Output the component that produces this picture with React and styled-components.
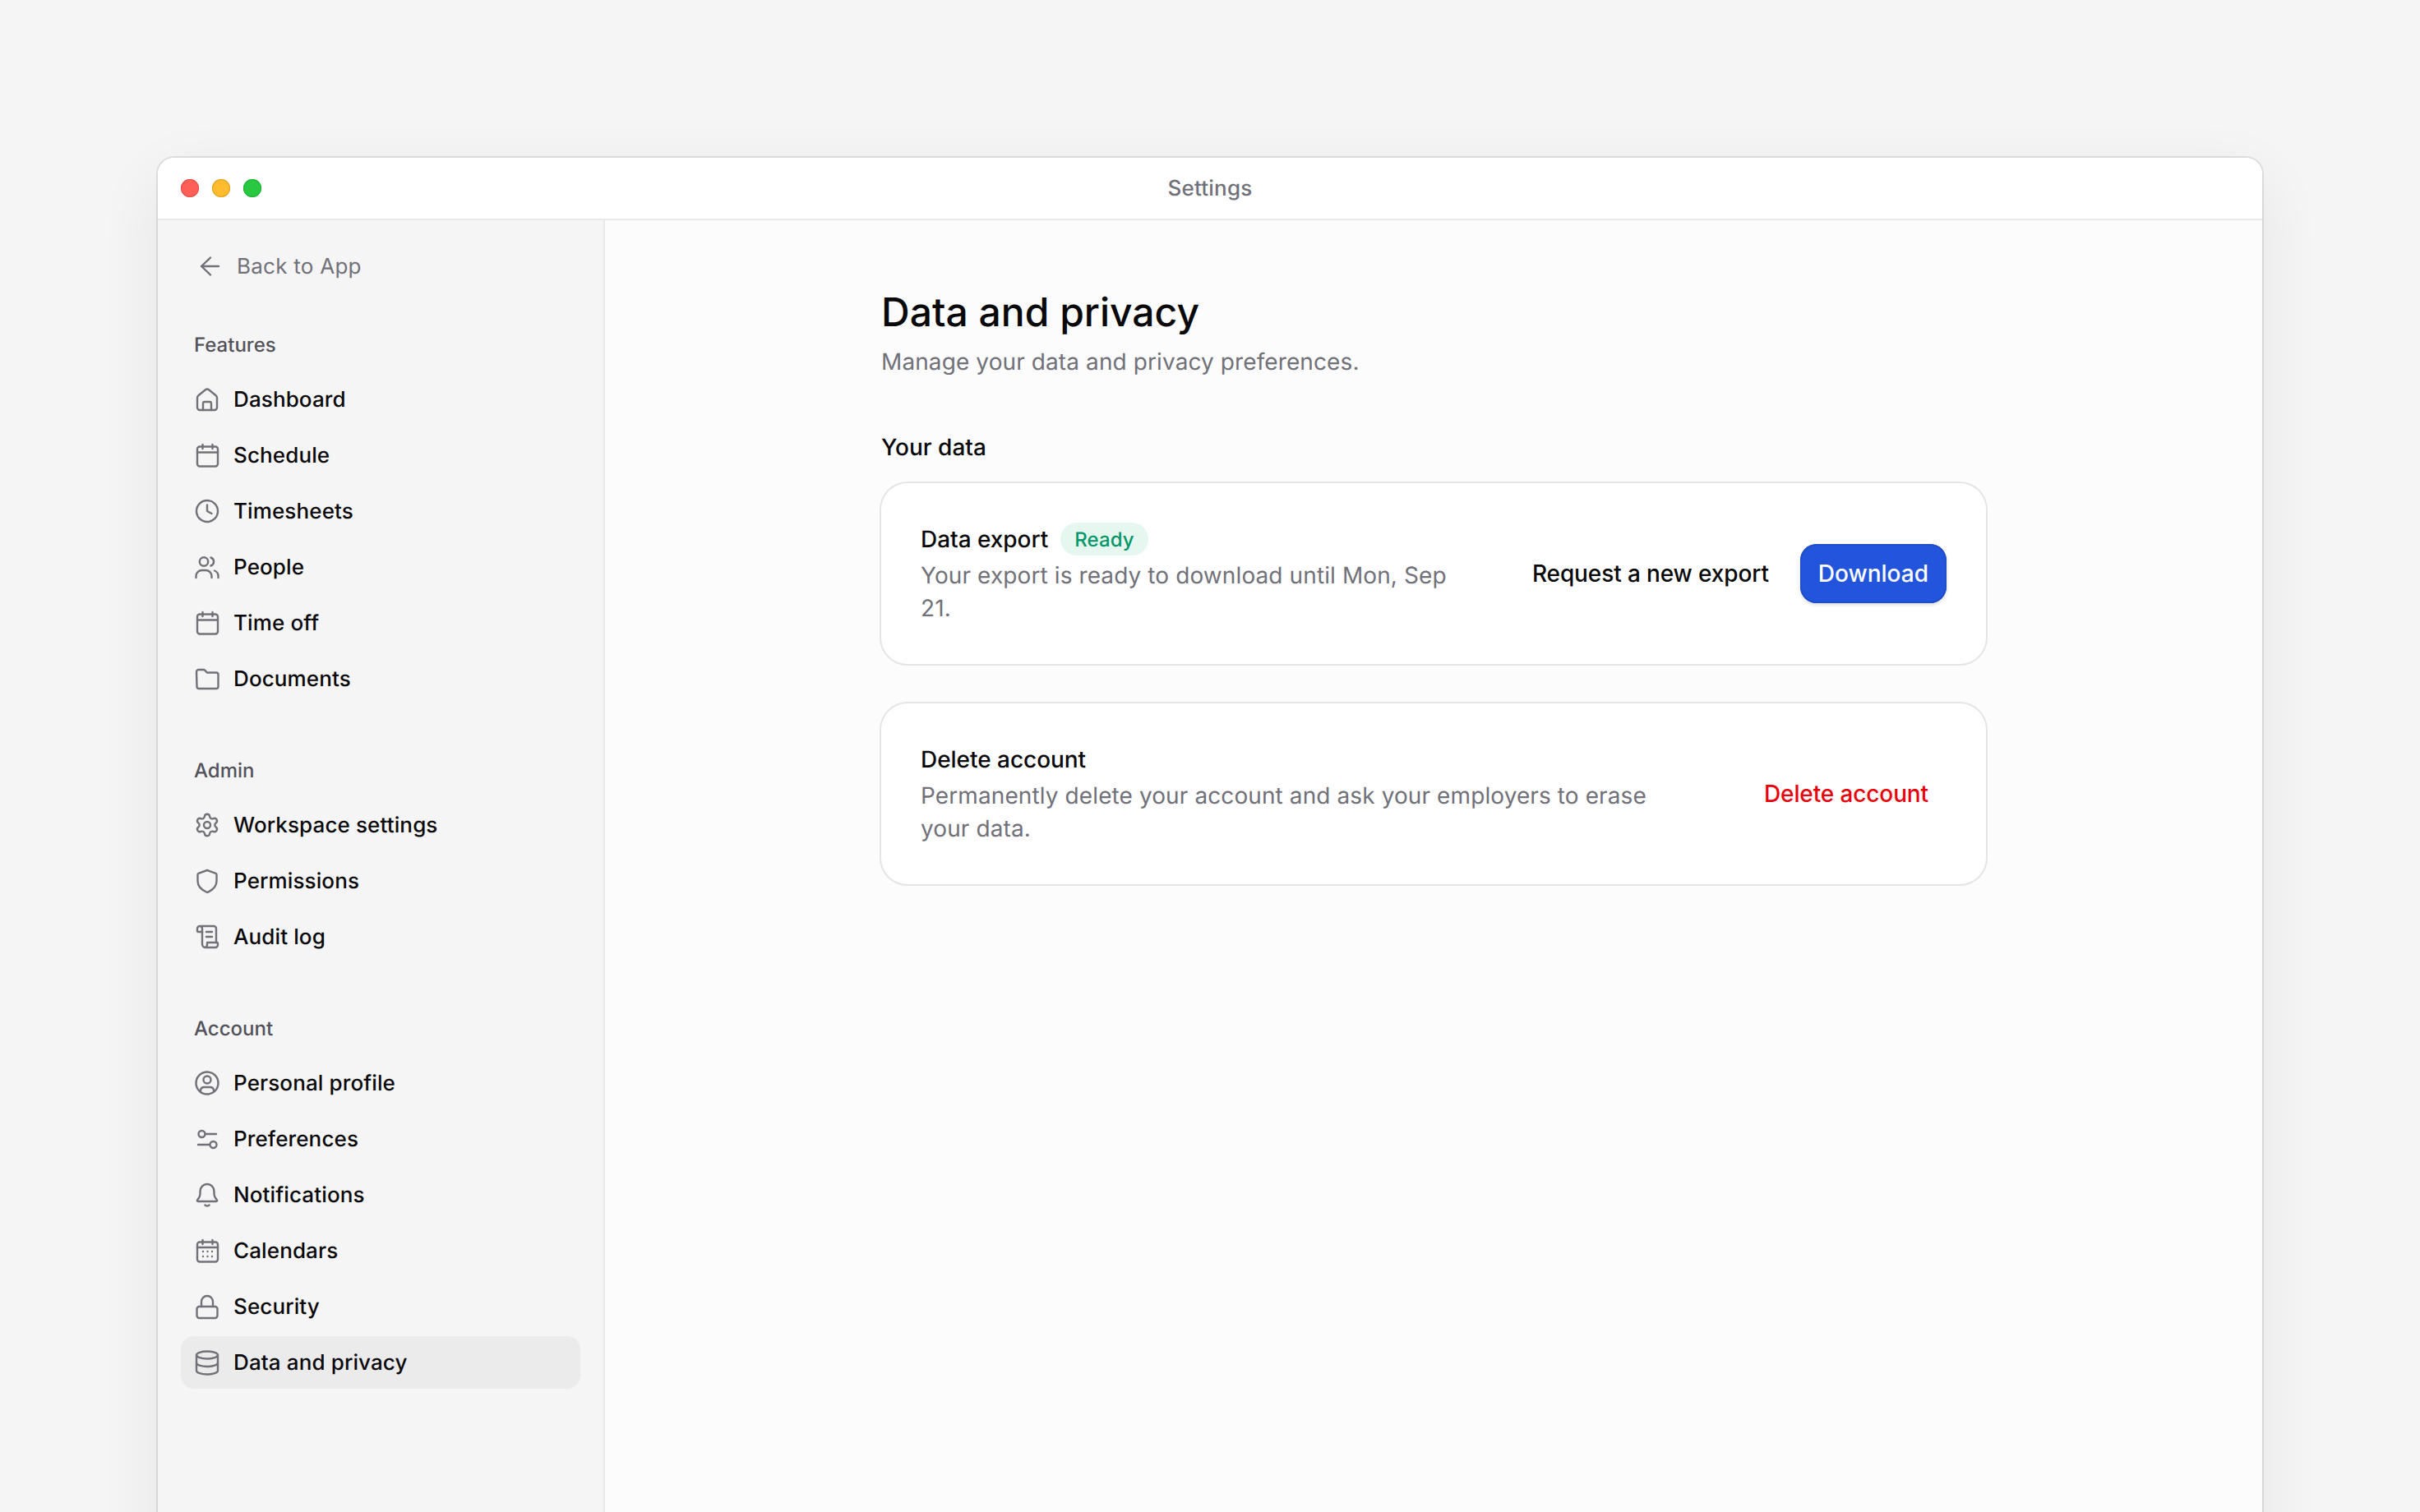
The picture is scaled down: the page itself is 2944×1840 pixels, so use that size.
import React from "react";
import styled, { createGlobalStyle } from "styled-components";
import { Settings as SettingsGear } from "lucide-react";

const Global = createGlobalStyle`
  html, body { margin: 0; padding: 0; background: #f5f5f5; }
  * { box-sizing: border-box; }
  body { font-family: Inter, "Liberation Sans", sans-serif; -webkit-font-smoothing: antialiased; text-rendering: geometricPrecision; }
`;

const Page = styled.div`
  width: 2944px; height: 1840px; overflow: hidden;
  background: #f5f5f5; padding: 192px 192px 0;
`;
const Win = styled.div`
  width: 2560px; height: 1720px; display: flex; flex-direction: column;
  border-radius: 20px 20px 0 0; background: #fff;
  box-shadow: 0 0 0 2px rgba(0,0,0,0.09), 0 24px 80px rgba(0,0,0,0.07);
`;
const TitleBar = styled.header`
  position: relative; flex: none; height: 76px; padding-top: 2px; display: flex; align-items: center; justify-content: center;
  background: #fff; border-bottom: 2px solid #e9e9e9; border-radius: 20px 20px 0 0;
`;
const Lights = styled.div`
  position: absolute; left: 28px; top: 26px; display: flex; gap: 16px;
`;
const Light = styled.span`
  width: 22px; height: 22px; border-radius: 50%; background: ${p => p.$c}; box-shadow: inset 0 0 0 1px ${p => p.$b};
`;
const WinTitle = styled.div`
  font-size: 26px; line-height: 40px; letter-spacing: 0.2px; color: #71717a; font-weight: 500;
`;
const Body = styled.div`
  flex: 1; display: flex; min-height: 0;
`;
const Side = styled.aside`
  flex: none; width: 544px; background: #f5f5f5; border-right: 2px solid #e9e9e9;
  padding: 24px 28px 0 28px;
`;
const Back = styled.div`
  height: 64px; display: flex; align-items: center; gap: 16px; padding-left: 20px;
  margin-bottom: 48px; color: #71717a; font-size: 26px; letter-spacing: 0.25px; font-weight: 400;
`;
const Group = styled.section`
  & + & { margin-top: 64px; }
`;
const Label = styled.div`
  height: 32px; line-height: 32px; padding-left: 16px; margin-bottom: 18px;
  font-size: 24px; font-weight: 500; color: #52525b;
`;
const Rows = styled.nav`
  display: flex; flex-direction: column; gap: 4px;
`;
const Row = styled.div`
  height: 64px; display: flex; align-items: center; gap: 16px; padding-left: 16px;
  border-radius: 16px; font-size: 26px; letter-spacing: 0.12px; font-weight: 500; color: #09090b;
  background: ${p => (p.$active ? "#ebebeb" : "transparent")};
`;
const IconSvg = styled.svg`
  flex: none; width: 32px; height: 32px; fill: none; stroke: #71717a;
  stroke-width: 2.4; stroke-linecap: round; stroke-linejoin: round;
`;
const Gear = styled(SettingsGear)`
  flex: none; width: 32px; height: 32px; color: #71717a;
`;
const Main = styled.main`
  flex: 1; background: #fcfcfc; padding-top: 76px; display: flex; justify-content: center;
`;
const Column = styled.div`
  width: 1344px;
`;
const H1 = styled.h1`
  margin: 0; font-size: 48px; line-height: 72px; font-weight: 500; color: #09090b;
`;
const Sub = styled.p`
  margin: 4px 0 0; font-size: 28px; line-height: 40px; letter-spacing: 0.1px; color: #71717a;
`;
const H2 = styled.h2`
  margin: 64px 0 24px; font-size: 28px; line-height: 40px; font-weight: 500; color: #09090b;
`;
const Card = styled.section`
  display: flex; align-items: center; gap: 64px; padding: 48px;
  background: #fff; border-radius: 32px;
  box-shadow: 0 0 0 2px #e5e5e5, 0 2px 2px rgba(0,0,0,0.04);
  & + & { margin-top: 48px; }
`;
const CardText = styled.div`
  flex: 1; min-width: 0;
`;
const CardTitle = styled.div`
  display: flex; align-items: center; gap: 15px; height: 40px; margin-bottom: 4px;
  font-size: 28px; letter-spacing: -0.04px; font-weight: 500; color: #09090b;
`;
const Badge = styled.span`
  height: 40px; padding: 0 17px; display: inline-flex; align-items: center; border-radius: 20px;
  background: #e6f7f0; color: #059669; font-size: 24px; letter-spacing: 0.1px; font-weight: 500;
`;
const Desc = styled.p`
  margin: 0; font-size: 28px; line-height: 40px; letter-spacing: 0.1px; color: #71717a;
`;
const Actions = styled.div`
  flex: none; display: flex; align-items: center; gap: 16px;
`;
const Ghost = styled.button`
  height: 72px; padding: 0 22px; border: 0; background: transparent; font: inherit;
  font-size: 28px; letter-spacing: -0.12px; font-weight: 500; color: ${p => (p.$danger ? "#e7000b" : "#09090b")};
`;
const Primary = styled.button`
  height: 72px; padding: 0 22px; border: 0; border-radius: 20px;
  background: #2255db; color: #fff; font: inherit; font-size: 28px; font-weight: 500;
  box-shadow: inset 0 0 0 2px #1f4ec8, 0 2px 4px rgba(0,0,0,0.15);
`;

const paths = {
  back: <path d="M26 16H5M16 5.500 5 16l11 10.500" />,
  house: <><path d="M14 4.2 5.4 11.2A3.5 3.5 0 0 0 4 14v12a3 3 0 0 0 3 3h18a3 3 0 0 0 3-3V14a3.5 3.5 0 0 0-1.4-2.8L18 4.2a3.2 3.2 0 0 0-4 0Z" /><path d="M11 29v-8a2 2 0 0 1 2-2h6a2 2 0 0 1 2 2v8" /></>,
  calendar: <><rect x="4" y="5.5" width="25" height="24" rx="3" /><path d="M4 12.5h25M10.5 3v5M22.5 3v5" /></>,
  clock: <><circle cx="16" cy="16" r="13" /><path d="M16 8.5V16l5.5 3" /></>,
  people: <><circle cx="12" cy="9.5" r="5.2" /><path d="M2.5 29v-2a7 7 0 0 1 7-7h5a7 7 0 0 1 7 7v2" /><path d="M20.5 4.5a5.3 5.3 0 0 1 0 10M25 20.5a7 7 0 0 1 4.5 6.5v2" /></>,
  folder: <path d="M3 7.5A2.5 2.5 0 0 1 5.500 5h6.300a2 2 0 0 1 1.400.6l2.600 2.900h11.200a2.500 2.500 0 0 1 2.500 2.500v14.500a2.500 2.500 0 0 1-2.500 2.500h-21a2.500 2.500 0 0 1-2.500-2.500Z" />,
  shield: <path d="M16 3 5.500 6.800a1.500 1.500 0 0 0-1 1.400V16c0 7 5.500 11.500 11.500 14 6-2.500 11.500-7 11.500-14V8.200a1.500 1.500 0 0 0-1-1.400Z" />,
  scroll: <><path d="M10 11V6a3 3 0 0 0-6 0v3a1 1 0 0 0 1 1h5M7 3h17a3 3 0 0 1 3 3v17" /><path d="M10 10v15a4 4 0 0 0 4 4h12a3 3 0 0 0 3-3v-2a1 1 0 0 0-1-1H16v2a4 4 0 0 1-2 4" /><path d="M15 10h7M15 16h7" /></>,
  user: <><circle cx="16" cy="16" r="13.500" /><circle cx="16" cy="12" r="4.500" /><path d="M8 25.500c0-3 2-4.500 4.500-4.500h7c2.500 0 4.500 1.500 4.500 4.500" /></>,
  sliders: <><circle cx="9.500" cy="10" r="4" /><path d="M13.500 10H27M5 23h13.500" /><circle cx="23.500" cy="23" r="4" /></>,
  bell: <><path d="M16 3C11 3 7.500 7 7.500 12v3c0 3-1.500 5-3.500 7.500a1 1 0 0 0 .8 1.500h22.400a1 1 0 0 0 .8-1.500c-2-2.500-3.500-4.500-3.500-7.500v-3C24.500 7 21 3 16 3Z" /><path d="M13.500 28.500c1 1.300 4 1.300 5 0" /></>,
  grid: <><rect x="4" y="5.500" width="25" height="24" rx="3" /><path d="M4 12h25M10.500 3v5M22.500 3v5" /><path d="M11 17v.01M16.500 17v.01M22 17v.01M11 23v.01M16.500 23v.01M22 23v.01" /></>,
  lock: <><rect x="3.500" y="16" width="25" height="14" rx="3" /><path d="M9 16v-6a7 7 0 0 1 14 0v6" /></>,
  db: <><ellipse cx="16" cy="7" rx="13" ry="4.500" /><path d="M3 7v19c0 2.500 5.800 4.500 13 4.500S29 28.500 29 26V7" /><path d="M3 16.500c0 2.500 5.800 4.500 13 4.500s13-2 13-4.500" /></>,
};

const Icon = ({ name }) => <IconSvg viewBox="0 0 32 32">{paths[name]}</IconSvg>;

const groups = [
  { label: "Features", items: [["house", "Dashboard"], ["calendar", "Schedule"], ["clock", "Timesheets"], ["people", "People"], ["calendar", "Time off"], ["folder", "Documents"]] },
  { label: "Admin", items: [["gear", "Workspace settings"], ["shield", "Permissions"], ["scroll", "Audit log"]] },
  { label: "Account", items: [["user", "Personal profile"], ["sliders", "Preferences"], ["bell", "Notifications"], ["grid", "Calendars"], ["lock", "Security"], ["db", "Data and privacy"]] },
];

export default function App() {
  return (
    <Page>
      <Global />
      <Win>
        <TitleBar>
          <Lights>
            <Light $c="#ff5f57" $b="#e5504a" />
            <Light $c="#febc2e" $b="#e0a326" />
            <Light $c="#28c840" $b="#23b038" />
          </Lights>
          <WinTitle>Settings</WinTitle>
        </TitleBar>
        <Body>
          <Side>
            <Back><Icon name="back" />Back to App</Back>
            {groups.map(g => (
              <Group key={g.label}>
                <Label>{g.label}</Label>
                <Rows>
                  {g.items.map(([icon, text]) => (
                    <Row key={text} $active={text === "Data and privacy"}>
                      {icon === "gear" ? <Gear strokeWidth={1.8} /> : <Icon name={icon} />}
                      {text}
                    </Row>
                  ))}
                </Rows>
              </Group>
            ))}
          </Side>
          <Main>
            <Column>
              <H1>Data and privacy</H1>
              <Sub>Manage your data and privacy preferences.</Sub>
              <H2>Your data</H2>
              <Card>
                <CardText>
                  <CardTitle>Data export<Badge>Ready</Badge></CardTitle>
                  <Desc>Your export is ready to download until Mon, Sep 21.</Desc>
                </CardText>
                <Actions>
                  <Ghost>Request a new export</Ghost>
                  <Primary>Download</Primary>
                </Actions>
              </Card>
              <Card>
                <CardText>
                  <CardTitle>Delete account</CardTitle>
                  <Desc>Permanently delete your account and ask your employers to erase your data.</Desc>
                </CardText>
                <Actions>
                  <Ghost $danger>Delete account</Ghost>
                </Actions>
              </Card>
            </Column>
          </Main>
        </Body>
      </Win>
    </Page>
  );
}
